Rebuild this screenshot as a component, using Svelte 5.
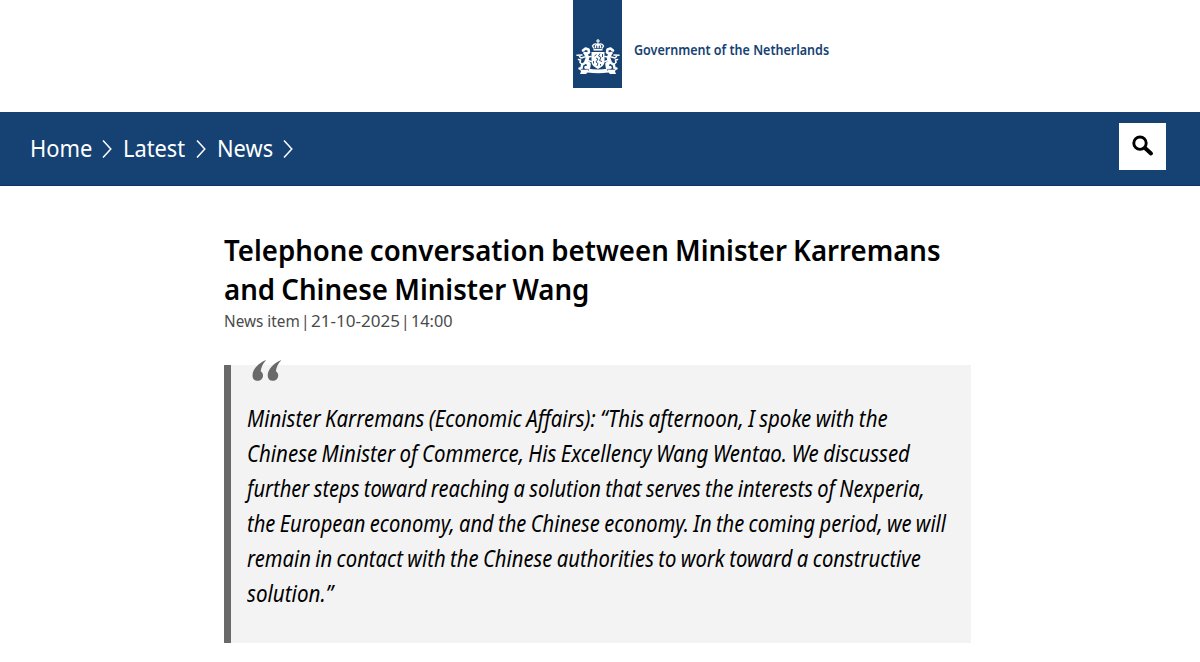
<script lang="ts">
  type Line = { text: string; width: number };

  const crumbs: Line[] = [
    { text: 'Home', width: 62 },
    { text: 'Latest', width: 62.5 },
    { text: 'News', width: 56 }
  ];

  const title: Line[] = [
    { text: 'Telephone conversation between Minister Karremans', width: 717 },
    { text: 'and Chinese Minister Wang', width: 365 }
  ];

  const meta: Line[] = [
    { text: 'News item', width: 76 },
    { text: '|', width: 9 },
    { text: '21-10-2025', width: 89 },
    { text: '|', width: 9 },
    { text: '14:00', width: 42 }
  ];

  const quote: Line[] = [
    { text: 'Minister Karremans (Economic Affairs): “This afternoon, I spoke with the', width: 641 },
    { text: 'Chinese Minister of Commerce, His Excellency Wang Wentao. We discussed', width: 663 },
    { text: 'further steps toward reaching a solution that serves the interests of Nexperia,', width: 678 },
    { text: 'the European economy, and the Chinese economy. In the coming period, we will', width: 699 },
    { text: 'remain in contact with the Chinese authorities to work toward a constructive', width: 674 },
    { text: 'solution.”', width: 86 }
  ];

  // squeezes a line of text to the given width
  function fit(node: HTMLElement, width: number) {
    node.style.transform = `scaleX(${width / node.offsetWidth})`;
  }
</script>

{#snippet lion()}
  <g fill="none" stroke="#fff" stroke-linecap="round" stroke-linejoin="round">
    <path d="M7 11.5l2.500-2 3 1 .5 3-2.500 1.500-2-1" stroke-width="2.600" />
    <path d="M10 15l1.500 4-1.500 4 3 2-.5 3.500h-2.500" stroke-width="3.600" />
    <path d="M9.500 23.500L6 26l-.5 3.500h-2" stroke-width="2.400" />
    <path d="M8.500 18l-3.500 1-1.500-1.500M1 16.200l5-.2" stroke-width="1.600" />
    <path d="M12 18l3-.5M12 21.500l3 1" stroke-width="1.700" />
    <path d="M6.500 25.500L4 23.500l.5-2.500-2-.5" stroke-width="1.600" />
  </g>
{/snippet}

<header class="logo">
  <div class="ribbon">
    <svg class="arms" viewBox="0 0 44 37" width="44" height="37" fill="#fff">
      <path d="M21.400 0h1.200v1.500H24v1h-1.400v2h-1.200v-2H20v-1h1.400z" />
      <g fill="none" stroke="#fff" stroke-width="1.400">
        <path d="M18 9.500l-1.500-2.500q1-2.500 3.500-2l2 2 2-2q2.500-.5 3.500 2L26 9.500M22 4v5M19.500 6v3M24.500 6v3" />
        <path d="M17.500 10.700h9" stroke-width="1.800" />
      </g>
      <path d="M15.500 13h13v9.500c0 4-3 5.500-6.500 7.500-3.500-2-6.500-3.500-6.500-7.500z" />
      <path d="M20.500 15.500l-2 1.500M24 14.500l-1.500 2.500 2.500 1.500-1.500 3 2.500 1M20 19l2 1-2 3 2 1.500-1 2.500M26.500 15v3M17.500 22v2.500M24.500 25v1.500" fill="none" stroke="#154273" stroke-width=".9" />
      {@render lion()}
      <g transform="matrix(-1 0 0 1 44 0)">
        {@render lion()}
      </g>
      <path d="M4 30.500h6l1.500-1q10.500 2 21 0l1.500 1h6l-1 2 1 2.500h-6l-1.500-1.500q-10.500 1.500-21 0L10 35H4l1-2.500z" />
      <path d="M5 30.300h7.500v1.500M39 30.300h-7.500v1.500" fill="none" stroke="#154273" stroke-width=".6" />
    </svg>
  </div>
  <span class="wordmark" use:fit={195}>Government of the Netherlands</span>
</header>

<nav>
  <ol>
    {#each crumbs as crumb}
      <li>
        <a href="#top" style:width="{crumb.width}px"><span class="line" use:fit={crumb.width}>{crumb.text}</span></a>
        <svg viewBox="0 0 10 18" width="10" height="18">
          <path d="M1 .5L8.800 9 1 17.500" fill="none" stroke="#fff" stroke-width="1.500" />
        </svg>
      </li>
    {/each}
  </ol>
  <button aria-label="Search">
    <svg viewBox="0 0 22 22" width="22" height="22" fill="none" stroke="#000">
      <circle cx="8" cy="8.200" r="6.200" stroke-width="2.900" />
      <path d="M13 13l6 5.500" stroke-width="4" stroke-linecap="round" />
    </svg>
  </button>
</nav>

<main>
  <h1>
    {#each title as line}
      <span class="line" use:fit={line.width}>{line.text}</span>
    {/each}
  </h1>
  <p class="meta">
    {#each meta as part}
      <span style:width="{part.width}px"><span class="line" use:fit={part.width}>{part.text}</span></span>
    {/each}
  </p>

  <blockquote>
    <svg class="mark" viewBox="0 0 30 22" width="30" height="22" fill="#696969">
      <path d="M13.500.2C6.500 3 .5 9.500.5 15.500c0 3.500 2 5.300 5 5.300s5.500-2 5.500-5.300c0-2-1-3.200-2.300-4.200C9 7.500 11 3.500 14 .2z" />
      <path d="M28.700.2c-7 2.800-13 9.300-13 15.300 0 3.500 2 5.300 5 5.300s5.500-2 5.500-5.300c0-2-1-3.200-2.300-4.200.3-3.800 2.300-7.800 5.300-11.100z" />
    </svg>
    {#each quote as line}
      <span class="line" use:fit={line.width}>{line.text}</span>
    {/each}
  </blockquote>
</main>

<style>
  :global(body) {
    background: #fff;
    color: #000;
    font-family: 'Noto Sans', 'Open Sans', sans-serif;
    overflow: hidden;
  }

  .logo {
    height: 112px;
    display: flex;
    padding-left: 573px;
    gap: 12px;
  }
  .ribbon {
    box-sizing: border-box;
    width: 49px;
    height: 88px;
    padding: 39px 0 0 3px;
    background: #154273;
  }
  .arms { display: block; }
  .wordmark {
    align-self: flex-start;
    margin-top: 40px;
    color: #154273;
    font-size: 14px;
    font-weight: 600;
    line-height: 20px;
    white-space: nowrap;
    transform-origin: left;
  }

  .line {
    display: block;
    width: max-content;
    white-space: nowrap;
    transform-origin: left;
  }

  nav {
    box-sizing: border-box;
    height: 74px;
    padding: 0 34px 0 30px;
    display: flex;
    justify-content: space-between;
    background: #154273;
    border-bottom: 1px solid #0f3460;
  }
  ol {
    display: flex;
    gap: 11px;
    margin: 0;
    padding: 20px 0 0;
    list-style: none;
  }
  li {
    display: flex;
    align-items: center;
    gap: 10px;
    height: 33px;
  }
  li a {
    color: #fff;
    font-size: 23px;
    line-height: 33px;
    text-decoration: none;
  }
  nav button {
    width: 47px;
    height: 47px;
    margin-top: 11px;
    padding: 0 0 2px;
    display: grid;
    place-items: center;
    background: #fff;
    border: 0;
  }

  main {
    width: 747px;
    margin-left: 224px;
    padding-top: 44px;
  }
  h1 {
    margin: 0;
    font-size: 29px;
    font-weight: 650;
    line-height: 39px;
    word-spacing: -1px;
  }
  .meta {
    display: flex;
    gap: 1px;
    margin: 1px 0 0;
    color: #4a4a4a;
    font-size: 15.5px;
    line-height: 24px;
  }

  blockquote {
    position: relative;
    box-sizing: border-box;
    height: 278px;
    margin: 32px 0 0;
    padding: 36px 0 0 16px;
    background: #f3f3f3;
    border-left: 7px solid #696969;
    font-size: 23px;
    font-style: italic;
    font-stretch: 80%;
    line-height: 35.1px;
    word-spacing: -1px;
  }
  .mark {
    position: absolute;
    top: -5px;
    left: 21px;
  }
</style>
